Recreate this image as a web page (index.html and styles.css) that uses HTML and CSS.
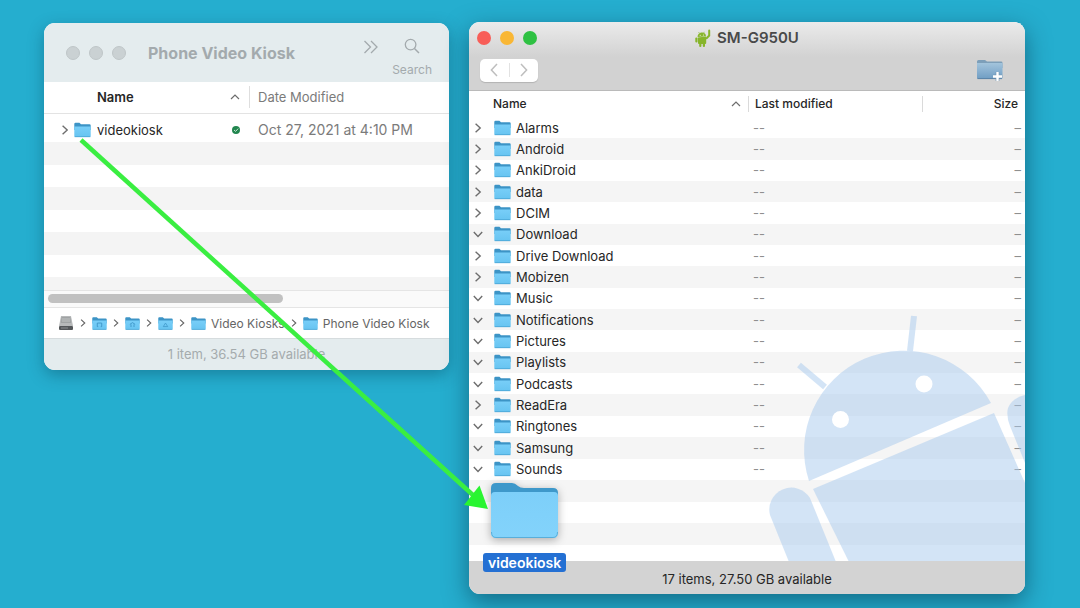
FILE: index.html
```html
<!DOCTYPE html>
<html lang="en">
<head>
<meta charset="utf-8">
<title>Copy a folder to a phone</title>
<link rel="stylesheet" href="styles.css">
</head>
<body>
<svg class="defs" aria-hidden="true">
  <defs>
    <linearGradient id="front" x1="0" y1="0" x2="0" y2="1"><stop offset="0" stop-color="#78cef8"/><stop offset="1" stop-color="#67c4f1"/></linearGradient>
    <linearGradient id="bigfront" x1="0" y1="0" x2="0" y2="1"><stop offset="0" stop-color="#7dcff9"/><stop offset="1" stop-color="#83d3fb"/></linearGradient>
    <linearGradient id="new" x1="0" y1="0" x2="0" y2="1"><stop offset="0" stop-color="#a3c4dc"/><stop offset="1" stop-color="#6f9dc3"/></linearGradient>
    <symbol id="folder" viewBox="0 0 17 16">
      <path d="M0.3 2Q0.3 0.8 1.5 0.8H5.4L7 2.2H15.5Q16.7 2.2 16.7 3.4V8H0.3Z" fill="#3c94c6"/>
      <path d="M0.3 4.6H16.7V13.7Q16.7 15 15.4 15H1.6Q0.3 15 0.3 13.7Z" fill="url(#front)"/>
      <path d="M0.6 14.7H16.4" stroke="#48a3d3" stroke-width="0.8"/>
    </symbol>
    <symbol id="right" viewBox="0 0 10 10"><path d="M2.6 0.8L7.2 5L2.6 9.2" fill="none" stroke="currentColor" stroke-width="1.4"/></symbol>
    <symbol id="down" viewBox="0 0 10 10"><path d="M0.8 3L5 7.4L9.2 3" fill="none" stroke="currentColor" stroke-width="1.4"/></symbol>
    <symbol id="up" viewBox="0 0 10 10"><path d="M1 7L5 3L9 7" fill="none" stroke="currentColor" stroke-width="1.2"/></symbol>
  </defs>
</svg>
<main class="desktop">
  <section class="window finder" aria-label="Phone Video Kiosk">
    <header class="finder-bar">
      <div class="lights"><i></i><i></i><i></i></div>
      <h1 class="finder-title">Phone Video Kiosk</h1>
      <button class="more" aria-label="More"><svg viewBox="0 0 16 14"><path d="M1.5 1L7.5 7L1.5 13M8 1L14 7L8 13" fill="none" stroke="currentColor" stroke-width="1.3"/></svg></button>
      <button class="search"><svg viewBox="0 0 16 16"><circle cx="6.6" cy="6.6" r="5.3" fill="none" stroke="currentColor" stroke-width="1.3"/><path d="M10.5 10.5L15 15" stroke="currentColor" stroke-width="1.5"/></svg>Search</button>
    </header>
    <table class="finder-list">
      <thead><tr><th class="name">Name</th><th class="sort"><svg class="chev"><use href="#up"/></svg></th><th class="date"><span>Date Modified</span></th></tr></thead>
      <tbody>
        <tr><td><span class="item"><svg class="chev"><use href="#right"/></svg><svg class="folder"><use href="#folder"/></svg>videokiosk</span></td>
        <td class="sort"><svg class="ok" viewBox="0 0 8 8"><circle cx="4" cy="4" r="4" fill="#22864f"/><path d="M2 4L3.6 5.4L6.2 2.6" fill="none" stroke="#c6e8d3"/></svg></td>
        <td class="date">Oct 27, 2021 at 4:10 PM</td></tr>
      </tbody>
    </table>
    <div class="blank"><i></i><i></i><i></i><i></i><i></i><i></i><i></i></div>
    <div class="scroll"><div class="thumb"></div></div>
    <nav class="path" aria-label="Path">
      <svg class="disk" viewBox="0 0 16 16"><path d="M3 1H13L15 11H1Z" fill="#b7b9ba"/><path d="M3.6 2H12.4L13.2 8H2.8Z" fill="#a0a3a4"/><path d="M4 4H12M4 6H12" stroke="#c9cbcc" stroke-width="0.8"/><rect x="1" y="11" width="14" height="4" rx="1" fill="#54575a"/><path d="M3 13H10" stroke="#8b8e90"/></svg>
      <svg class="sep"><use href="#right"/></svg>
      <svg class="pf" viewBox="0 0 17 16"><use href="#folder"/><path d="M7 11.5H6V7.5H7M10 11.5H11V7.5H10M7 7.5H10" fill="none" stroke="#3c94c6"/></svg>
      <svg class="sep"><use href="#right"/></svg>
      <svg class="pf" viewBox="0 0 17 16"><use href="#folder"/><path d="M5.5 9L8.5 7L11.5 9M6.8 9V12M10.2 9V12" fill="none" stroke="#3c94c6"/></svg>
      <svg class="sep"><use href="#right"/></svg>
      <svg class="pf" viewBox="0 0 17 16"><use href="#folder"/><path d="M6 11.5L8.5 7.5L11 11.5Z" fill="none" stroke="#3c94c6" stroke-width="0.8"/></svg>
      <svg class="sep"><use href="#right"/></svg>
      <a href="#"><svg class="pf"><use href="#folder"/></svg>Video Kiosks</a>
      <svg class="sep"><use href="#right"/></svg>
      <a href="#"><svg class="pf"><use href="#folder"/></svg>Phone Video Kiosk</a>
    </nav>
    <footer class="finder-foot">1 item, 36.54 GB available</footer>
  </section>

  <section class="window phone" aria-label="SM-G950U">
    <header class="phone-bar">
      <div class="title-row">
        <div class="lights color"><i></i><i></i><i></i></div>
        <h1 class="phone-title"><svg viewBox="0 0 16 18"><g fill="#87b52b"><path d="M2.6 8A4.2 4 0 0 1 11 7.2Z"/><path d="M2.8 8.4L11.2 7.6V14.2Q11.2 15 10.2 15H4Q3 15 3 14.2Z"/><rect x="0.3" y="8.6" width="2.2" height="5" rx="1"/><rect x="4.2" y="13" width="2.2" height="5" rx="1"/><rect x="7.8" y="13" width="2.2" height="5" rx="1"/><path d="M11.8 9.2L14.2 6.5V1.6" fill="none" stroke="#87b52b" stroke-width="2" stroke-linecap="round"/></g><path d="M3.6 3L4.6 4.6M9.2 2.8L8.6 4.4" stroke="#9bc150" stroke-width="0.8"/><circle cx="5.2" cy="6.2" r="0.5" fill="#fff"/><circle cx="8.4" cy="5.9" r="0.5" fill="#fff"/></svg>SM-G950U</h1>
      </div>
      <div class="tool-row">
        <div class="nav"><button aria-label="Back"><svg viewBox="0 0 8 14"><path d="M7 1L1.4 7L7 13" fill="none" stroke="currentColor" stroke-width="1.5"/></svg></button><button aria-label="Forward"><svg viewBox="0 0 8 14"><path d="M1 1L6.6 7L1 13" fill="none" stroke="currentColor" stroke-width="1.5"/></svg></button></div>
        <button class="new" aria-label="New folder"><svg viewBox="0 0 28 24"><path d="M1 3.5Q1 2 2.5 2H9L11 3.6H25Q26.5 3.6 26.5 5V10H1Z" fill="#7d9fb9"/><path d="M1 5H26.5V19.5Q26.5 21 25 21H2.5Q1 21 1 19.5Z" fill="url(#new)"/><path d="M1.5 20.6H26" stroke="#587fa3" stroke-width="0.9"/><path d="M21.5 14V23M17 18.5H26" stroke="#6f94b3" stroke-width="3.6"/><path d="M21.5 14V23M17 18.5H26" stroke="#fff" stroke-width="2.4"/></svg></button>
      </div>
    </header>
    <div class="phone-body">
      <svg class="robot" viewBox="0 11 260 250" aria-hidden="true">
        <g fill="#a7c9ee" fill-opacity="0.5">
          <path d="M44 181A99.4 99.4 0 0 1 226 103Z"/>
          <path d="M48 189L229 113L260 183V262H84Z"/>
          <path d="M24 262L5 215A22 22 0 0 1 45 198L71 262Z"/>
          <path d="M260 95Q247 98 243 108Q241 116 245 126L260 163Z"/>
        </g>
        <path d="M34 65L60 87M149 16L145 51" stroke="#a7c9ee" stroke-opacity="0.5" stroke-width="6"/>
        <circle cx="75.5" cy="119.5" r="8.5" fill="#fff"/><circle cx="159" cy="84" r="8.5" fill="#fff"/>
      </svg>
      <table class="phone-list">
        <thead><tr><th class="name"><span class="head">Name<svg class="chev"><use href="#up"/></svg></span></th><th class="mod"><span>Last modified</span></th><th class="size"><span>Size</span></th></tr></thead>
        <tbody id="files"></tbody>
      </table>
      <div class="empty-rows"><i></i><i></i><i></i><i></i></div>
    </div>
    <footer class="phone-foot">17 items, 27.50 GB available</footer>
    <figure class="dragged">
      <svg viewBox="0 0 72 60"><path d="M2 7Q2 2 7 2H23Q26 2 29 5Q31 7 35 7H64Q69 7 69 12V25H2Z" fill="#3e98ca"/><path d="M2 15Q2 11 6 11H65Q69 11 69 15V52Q69 57 64 57H7Q2 57 2 52Z" fill="url(#bigfront)"/><path d="M2.5 51Q2.5 56.5 7 56.5H64Q68.5 56.5 68.5 51" fill="none" stroke="#58aeda"/></svg>
      <figcaption>videokiosk</figcaption>
    </figure>
  </section>
  <svg class="arrow" viewBox="0 0 1080 608" preserveAspectRatio="none" aria-hidden="true"><path d="M81 140L474 496" stroke="#3aee41" stroke-width="4.5"/><path d="M488 509L479.5 485.5L464 505Z" fill="#29f531"/></svg>
</main>
<script src="files.js"></script>
</body>
</html>
```
FILE: styles.css
```css
* { box-sizing: border-box; }
body { margin: 0; font-family: Inter, "Liberation Sans", sans-serif; font-size: 13px; color: #262626; background: #25aecf; }
button { border: 0; padding: 0; background: none; font: inherit; color: inherit; }
h1, figure { margin: 0; }
svg { display: block; flex: none; }
i { display: block; }
a { color: inherit; text-decoration: none; }
.defs { position: absolute; width: 0; height: 0; }
.desktop { position: relative; min-height: 100vh; padding: 22px 55px 14px 44px; display: grid; grid-template-columns: 405fr 556fr; gap: 20px; align-items: start; }
.window { border-radius: 11px; background: #fff; min-width: 0; }
.chev { width: 10px; height: 10px; color: #6d6d6d; }
.folder { width: 17px; height: 16px; }
table { width: 100%; border-collapse: collapse; table-layout: fixed; }
th, td { padding: 0; text-align: left; font-weight: 400; white-space: nowrap; }
.lights { display: flex; gap: 9px; }
.lights i { width: 14px; height: 14px; border-radius: 50%; background: #cad1d3; border: 1px solid #bfc6c8; }

.finder { margin-top: 1px; overflow: hidden; box-shadow: 0 5px 16px rgba(0, 50, 70, .35); }
.finder-bar { display: flex; height: 59px; padding: 0 17px 0 22px; background: #e4ecee; color: #a3aaad; align-items: center; }
.finder-title { font-size: 16px; font-weight: 700; margin-left: 22px; flex: 1; white-space: nowrap; }
.more { align-self: flex-start; margin: 17px 13px 0 0; }
.more svg { width: 16px; height: 14px; }
.search { align-self: flex-end; padding-bottom: 4px; display: flex; flex-direction: column; align-items: center; gap: 8px; line-height: 16px; font-size: 12px; }
.search svg { width: 16px; height: 16px; }
.finder-list th { height: 31px; border-bottom: 1px solid #e3e3e3; }
.finder-list .name { padding-left: 53px; font-weight: 600; }
.finder-list .sort { width: 19px; }
.finder-list .date { width: 200px; padding-left: 9px; color: #7b7b7b; }
.finder-list th.date { padding-left: 0; }
.finder-list .date span { display: block; border-left: 1px solid #dedede; padding-left: 8px; line-height: 22px; }
.finder-list td { height: 29px; padding-top: 5px; line-height: 16px; }
.finder-list td.date { font-size: 14px; }
.item { display: flex; align-items: center; padding-left: 16px; }
.item .folder { margin: 0 6px 0 4px; }
.ok { width: 8px; height: 8px; margin-left: 2px; }
.blank { display: grid; grid-template-rows: repeat(6, 1fr) 13px; height: 148px; }
.blank i:nth-child(odd) { background: #f4f4f4; }
.scroll { height: 18px; border: solid #e5e5e5; border-width: 1px 0; background: #fafafa; padding: 3px 4px; }
.thumb { width: 235px; height: 9px; border-radius: 5px; background: #c1c1c1; }
.path { display: flex; align-items: center; height: 31px; padding: 0 14px; gap: 5px; color: #656565; font-size: 12px; white-space: nowrap; border-bottom: 1px solid #d6dcde; }
.path a { display: flex; align-items: center; gap: 5px; }
.disk { width: 16px; height: 16px; }
.pf { width: 15px; height: 15px; }
.sep { width: 8px; height: 8px; }
.finder-foot { height: 31px; line-height: 31px; text-align: center; background: #e4ecee; color: #a4abad; }

.phone { position: relative; box-shadow: 0 8px 24px rgba(0, 40, 60, .5); }
.phone-bar { height: 69px; border-bottom: 1px solid #bababa; border-radius: 11px 11px 0 0; background: linear-gradient(#ebebeb, #d2d2d2 35px); }
.title-row { display: grid; grid-template-columns: 1fr auto 1fr; align-items: center; height: 31px; padding: 0 8px; }
.color i { border: 0; background: #f85e58; }
.color i:nth-child(2) { background: #f9b735; }
.color i:nth-child(3) { background: #2fc143; }
.phone-title { display: flex; align-items: center; gap: 6px; font-size: 15px; font-weight: 600; line-height: 18px; color: #494949; }
.phone-title svg { width: 16px; height: 18px; }
.tool-row { display: flex; justify-content: space-between; align-items: center; padding: 5px 21px 0 11px; }
.nav { display: flex; width: 58px; height: 23px; border-radius: 5px; background: #fff; box-shadow: 0 1px 1px rgba(0, 0, 0, .15); color: #bebebe; align-items: center; }
.nav button { flex: 1; display: flex; justify-content: center; }
.nav button + button { border-left: 1px solid #e2e2e2; }
.nav svg { width: 8px; height: 14px; }
.new svg { width: 28px; height: 24px; }
.phone-body { position: relative; height: 470px; overflow: hidden; }
.robot { position: absolute; right: 0; bottom: 0; width: 260px; height: 250px; }
.phone-list { height: 389px; }
.phone-list th { height: 26px; font-weight: 500; font-size: 12px; line-height: 16px; }
.phone-list th.name { padding-left: 24px; }
.head { display: flex; justify-content: space-between; align-items: center; padding-right: 7px; }
.mod { width: 174px; }
.mod span, .size span { display: block; border-left: 1px solid #dadada; padding-left: 6px; line-height: 16px; }
.size { width: 103px; }
.phone-list .size { text-align: right; padding-right: 4px; }
.size span { padding-right: 3px; }
.phone-list td { line-height: 16px; }
.phone-list td.mod { padding-left: 5px; }
.phone-list td.mod, .phone-list td.size { color: #8f8f8f; }
.phone-list tbody tr:nth-child(even), .empty-rows i:nth-child(odd) { background: rgba(0, 0, 0, .04); }
.empty-rows { display: grid; grid-template-rows: repeat(4, 1fr); height: 86px; }
.file { display: flex; align-items: center; padding-left: 4px; }
.file .folder { margin: 0 5px 0 11px; }
.phone-foot { height: 33px; line-height: 36px; text-align: center; background: #d3d3d3; border-radius: 0 0 11px 11px; }
.dragged { position: absolute; left: 14px; bottom: 22px; display: flex; flex-direction: column; align-items: center; gap: 12px; }
.dragged svg { width: 72px; height: 60px; filter: drop-shadow(0 2px 4px rgba(0, 0, 0, .3)); }
.dragged figcaption { padding: 0 5px; font-size: 14px; line-height: 19px; border-radius: 3px; background: #2470d3; color: #fff; font-weight: 600; }
.arrow { position: absolute; inset: 0; width: 100%; height: 608px; pointer-events: none; }
```
FILE: files.js
```js
const files = [
  ["Alarms", 0], ["Android", 0], ["AnkiDroid", 0], ["data", 0], ["DCIM", 0],
  ["Download", 1], ["Drive Download", 0], ["Mobizen", 0], ["Music", 1],
  ["Notifications", 1], ["Pictures", 1], ["Playlists", 1], ["Podcasts", 1],
  ["ReadEra", 0], ["Ringtones", 1], ["Samsung", 1], ["Sounds", 1]
];
const rows = files.map(([name, open]) => `<tr><td><span class="file"><svg class="chev"><use href="#${open ? "down" : "right"}"/></svg><svg class="folder"><use href="#folder"/></svg>${name}</span></td><td class="mod">--</td><td class="size">–</td></tr>`);
document.getElementById("files").innerHTML = rows.join("");
```
